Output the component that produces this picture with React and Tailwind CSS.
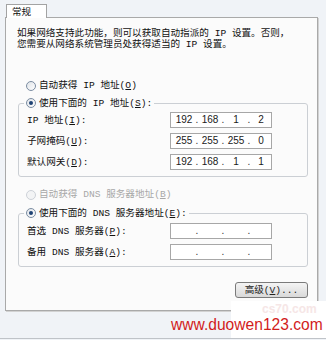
import React, { Fragment } from "react";

const CJK = "font-['Liberation_Mono','Noto_Sans_CJK_SC',monospace]";

function Radio({ checked, disabled }) {
  return (
    <span
      className={
        disabled
          ? "relative inline-flex w-[10px] h-[10px] shrink-0 items-center justify-center rounded-full border border-[#cdd2d8] bg-[#f3f4f5]"
          : "relative inline-flex w-[10px] h-[10px] shrink-0 items-center justify-center rounded-full border border-[#7b8da2] bg-gradient-to-br from-[#dfe3e8] to-white"
      }
    >
      {checked && <span className="w-[4px] h-[4px] rounded-full bg-[#1f4374]" />}
    </span>
  );
}

function U({ children }) {
  return <span className="underline underline-offset-[1px]">{children}</span>;
}

function IpField({ parts }) {
  return (
    <div className="flex h-[16px] w-[102px] items-center overflow-hidden border border-[#a7a7a7] bg-white pl-[2px] font-['Liberation_Sans',sans-serif] text-[10px] leading-[14px] text-[#1a1a1a]">
      {[0, 1, 2, 3].map((i) => (
        <Fragment key={i}>
          <span className={i === 3 ? "w-[20px] text-center" : "w-[22px] text-center"}>
            {parts ? parts[i] : ""}
          </span>
          {i < 3 && <span className="w-[4px] text-center text-[#333]">.</span>}
        </Fragment>
      ))}
    </div>
  );
}

function Row({ label, parts }) {
  return (
    <div className="flex h-[16px] items-center pl-[3px]">
      <span className="w-[143px] whitespace-nowrap">{label}</span>
      <IpField parts={parts} />
    </div>
  );
}

export default function App() {
  return (
    <div
      className={`relative flex h-[340px] w-[326px] flex-col overflow-hidden bg-[#f0f3f7] text-[9.6px] leading-[13px] text-[#111] ${CJK}`}
    >
      <div className="flex flex-col items-start pl-[5px] pt-[4px]">
        {/* tab */}
        <div className="relative z-10 -mb-px ml-[1px] h-[14px] w-[41px] border-l border-r border-t border-[#a3a3a3] bg-white pl-[5px] pt-[1px]">
          常规
        </div>
        {/* panel */}
        <div className="flex h-[294px] w-[313px] flex-col border border-[#a9a9a9] bg-[#fbfbfb] shadow-[1px_1px_0_#d2d2d2]">
          <div className="ml-[11px] mt-[10px] leading-[11px]">
            <div className="whitespace-nowrap">如果网络支持此功能，则可以获取自动指派的 IP 设置。否则，</div>
            <div className="whitespace-nowrap">您需要从网络系统管理员处获得适当的 IP 设置。</div>
          </div>

          <div className="ml-[20px] mt-[29px] flex h-[13px] items-center gap-[3px]">
            <Radio />
            <span>
              自动获得 IP 地址(<U>O</U>)
            </span>
          </div>

          <fieldset className="ml-[12px] mt-[4px] w-[290px] rounded-[3px] border border-[#cbcfd4] px-[5px] pb-[6px]">
            <legend className="px-[2px]">
              <span className="flex h-[14px] items-center gap-[3px]">
                <Radio checked />
                <span>
                  使用下面的 IP 地址(<U>S</U>):
                </span>
              </span>
            </legend>
            <div className="mt-[2px] flex flex-col gap-[5px]">
              <Row
                label={
                  <>
                    IP 地址(<U>I</U>):
                  </>
                }
                parts={["192", "168", "1", "2"]}
              />
              <Row
                label={
                  <>
                    子网掩码(<U>U</U>):
                  </>
                }
                parts={["255", "255", "255", "0"]}
              />
              <Row
                label={
                  <>
                    默认网关(<U>D</U>):
                  </>
                }
                parts={["192", "168", "1", "1"]}
              />
            </div>
          </fieldset>

          <div className="ml-[20px] mt-[11px] flex h-[13px] items-center gap-[3px] text-[#a8a8a8]">
            <Radio disabled />
            <span>
              自动获得 DNS 服务器地址(<U>B</U>)
            </span>
          </div>

          <fieldset className="ml-[12px] mt-[5px] w-[290px] rounded-[3px] border border-[#cbcfd4] px-[5px] pb-[6px]">
            <legend className="px-[2px]">
              <span className="flex h-[14px] items-center gap-[3px]">
                <Radio checked />
                <span>
                  使用下面的 DNS 服务器地址(<U>E</U>):
                </span>
              </span>
            </legend>
            <div className="mt-[3px] flex flex-col gap-[5px]">
              <Row
                label={
                  <>
                    首选 DNS 服务器(<U>P</U>):
                  </>
                }
              />
              <Row
                label={
                  <>
                    备用 DNS 服务器(<U>A</U>):
                  </>
                }
              />
            </div>
          </fieldset>

          <div className="mr-[9px] mt-[15px] flex h-[16px] w-[73px] items-center justify-center self-end rounded-[3px] border border-[#7a7a7a] bg-gradient-to-b from-[#f4f4f4] to-[#d9d9d9] text-[#222]">
            高级(<U>V</U>)...
          </div>
        </div>
      </div>

      <div className="flex-1" />
      <div className="h-px bg-[#bfc3c8]" />
      <div className="h-px" />

      {/* watermark overlay */}
      <div className="absolute left-[231px] top-[301px] h-[37px] w-[95px] bg-white" />
      <div className="absolute left-[262px] top-[303px] font-['Liberation_Sans',sans-serif] text-[12px] font-bold leading-[12px] text-[#f6e6e6]">
        cs70.com
      </div>
      <div className="absolute left-[171px] top-[317px] whitespace-nowrap font-['Liberation_Sans',sans-serif] text-[15.6px] leading-[16px] text-[#d21c1c]">
        www.duowen123.com
      </div>
    </div>
  );
}
